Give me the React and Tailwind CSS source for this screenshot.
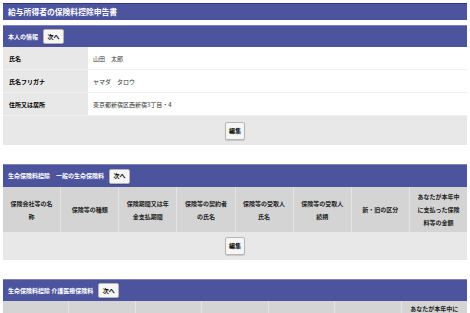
import React from "react";

const font = { fontFamily: '"Noto Sans CJK JP", "Noto Sans", sans-serif' };

function Btn({ children, className = "" }) {
  return (
    <button
      className={
        "flex items-center justify-center rounded-[2px] border border-[#b5b5b5] bg-[#f6f6f6] text-[6px] font-bold leading-none text-black shadow-[0_1px_1px_rgba(0,0,0,0.15)] " +
        className
      }
    >
      {children}
    </button>
  );
}

function SectionHeader({ title, h = "h-[23px]", btnW = "w-[21px]" }) {
  return (
    <div className={"flex items-center gap-[5px] border-t border-[#7d82b4] bg-[#4d549e] pl-[5px] " + h}>
      <span className="text-[6px] font-bold leading-none text-white">{title}</span>
      <Btn className={"h-[15px] " + btnW}>次へ</Btn>
    </div>
  );
}

function InfoRow({ label, value }) {
  return (
    <div className="flex h-[23px] border-b border-[#f0f0f0]">
      <div className="flex w-[85px] items-center bg-[#e8e8e8] pl-[6px] text-[6px] font-bold text-black">
        {label}
      </div>
      <div className="flex flex-1 items-center bg-white pl-[5px] text-[6px] text-[#333]">{value}</div>
    </div>
  );
}

function EditRow({ h = "h-[28px]" }) {
  return (
    <div className={"flex items-center justify-center bg-[#e8e8e8] " + h}>
      <Btn className="h-[18px] w-[20px]">編集</Btn>
    </div>
  );
}

function HeadCells({ cols }) {
  return cols.map((lines, i) => (
    <div
      key={i}
      className="flex flex-1 flex-col items-center justify-center border-l border-[#e4e4e4] text-center text-[6px] font-bold leading-[13px] text-[#222] first:border-l-0"
    >
      {lines.map((l, j) => (
        <span key={j}>{l}</span>
      ))}
    </div>
  ));
}

export default function App() {
  const cols1 = [
    ["保険会社等の名", "称"],
    ["保険等の種類"],
    ["保険期間又は年", "金支払期間"],
    ["保険等の契約者", "の氏名"],
    ["保険等の受取人", "氏名"],
    ["保険等の受取人", "続柄"],
    ["新・旧の区分"],
    ["あなたが本年中", "に支払った保険", "料等の金額"],
  ];
  const cols2 = [[""], [""], [""], [""], [""], [""], ["あなたが本年中に", "支払った保険料", "等の金額"]];
  return (
    <div style={font} className="h-[313px] w-[470px] overflow-hidden bg-white px-[3px] pt-[3px]">
      <div className="flex h-[17px] items-center border-t border-[#2e3890] bg-[#4d549e] pl-[5px] text-[7.8px] font-bold leading-none text-white">
        給与所得者の保険料控除申告書
      </div>

      <div className="mt-[5px]">
        <SectionHeader title="本人の情報" h="h-[22px]" />
        <InfoRow label="氏名" value="山田　太郎" />
        <InfoRow label="氏名フリガナ" value="ヤマダ　タロウ" />
        <InfoRow label="住所又は居所" value="東京都新宿区西新宿3丁目・4" />
        <EditRow h="h-[29px]" />
      </div>

      <div className="mt-[19px]">
        <SectionHeader title="生命保険料控除　一般の生命保険料" />
        <div className="flex h-[45px] bg-[#d4d4d4]">
          <HeadCells cols={cols1} />
        </div>
        <EditRow h="h-[28px]" />
      </div>

      <div className="mt-[19px]">
        <SectionHeader title="生命保険料控除 介護医療保険料" h="h-[22px]" />
        <div className="flex h-[45px] items-start bg-[#d4d4d4]">
          {cols2.map((lines, i) => (
            <div
              key={i}
              className="flex h-full flex-1 flex-col items-center justify-start border-l border-[#e4e4e4] pt-[1px] text-center text-[6px] font-bold leading-[13px] text-[#222] first:border-l-0"
            >
              {lines.map((l, j) => (
                <span key={j}>{l}</span>
              ))}
            </div>
          ))}
        </div>
      </div>
    </div>
  );
}
